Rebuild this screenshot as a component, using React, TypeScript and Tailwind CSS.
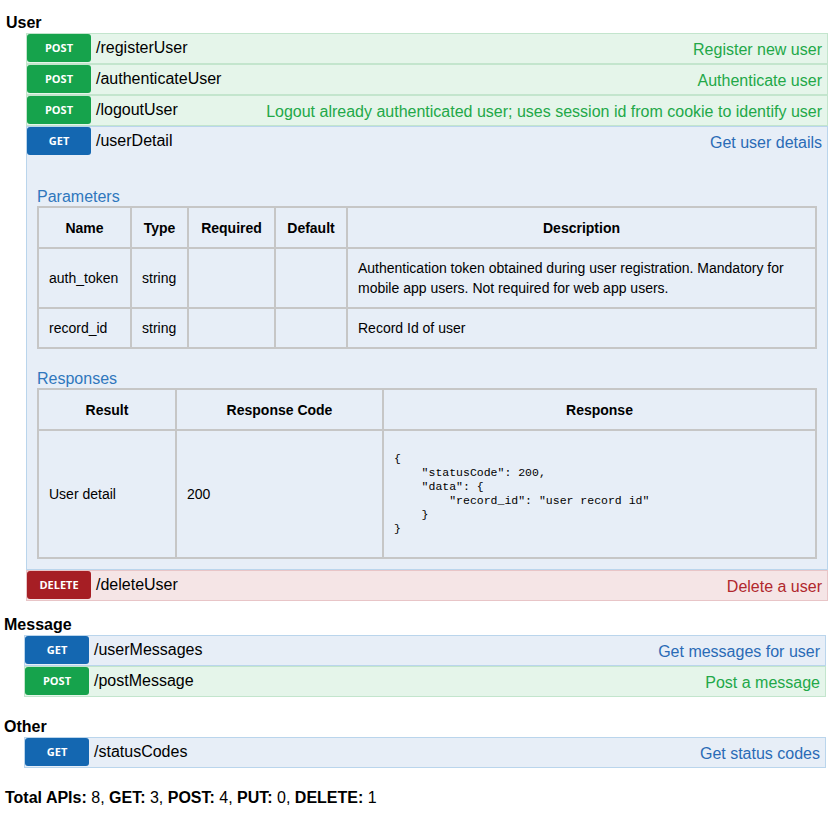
import React from "react";

type Method = "GET" | "POST" | "DELETE";

const tone: Record<Method, { row: string; badge: string; desc: string }> = {
  POST: { row: "bg-[#e5f5ea] border-[#c3e5cd]", badge: "bg-[#16a34c]", desc: "text-[#22a848]" },
  GET: { row: "bg-[#e7eef7] border-[#bad5ec]", badge: "bg-[#1467b1]", desc: "text-[#2a6bb6]" },
  DELETE: { row: "bg-[#f5e5e6] border-[#e8c5c7]", badge: "bg-[#a61e24]", desc: "text-[#b1282d]" },
};

function RowHead({ method, path, desc }: { method: Method; path: string; desc: string }) {
  const t = tone[method];
  return (
    <div className="flex h-[29px] items-start">
      <span
        className={`${t.badge} flex h-[28px] w-[64px] flex-none items-center justify-center rounded-[3px] font-['Open_Sans',sans-serif] text-[11px] font-bold text-white`}
      >
        {method}
      </span>
      <span className="ml-[5px] mt-[5px] text-base leading-[18px]">{path}</span>
      <span className={`ml-auto mr-[5px] mt-[7px] text-base leading-[18px] ${t.desc}`}>{desc}</span>
    </div>
  );
}

function Row(props: { method: Method; path: string; desc: string }) {
  return (
    <div className={`border ${tone[props.method].row}`}>
      <RowHead {...props} />
    </div>
  );
}

const th = "border border-[#c6c6c6] px-[10px] h-[41px] text-center font-bold";
const td = "border border-[#c6c6c6] px-[10px] align-middle";

function UserDetail() {
  return (
    <div className={`border ${tone.GET.row} pb-[10px]`}>
      <RowHead method="GET" path="/userDetail" desc="Get user details" />
      <div className="px-[10px] text-sm">
        <p className="mt-[32px] text-base leading-[18px] text-[#2f77bd]">Parameters</p>
        <table className="w-full border-separate border-spacing-0 border border-[#c6c6c6] leading-[20px]">
          <thead>
            <tr>
              <th className={`${th} w-[93px]`}>Name</th>
              <th className={`${th} w-[57px]`}>Type</th>
              <th className={`${th} w-[87px]`}>Required</th>
              <th className={`${th} w-[72px]`}>Default</th>
              <th className={th}>Description</th>
            </tr>
          </thead>
          <tbody>
            <tr className="h-[60px]">
              <td className={td}>auth_token</td>
              <td className={td}>string</td>
              <td className={td}></td>
              <td className={td}></td>
              <td className={td}>
                Authentication token obtained during user registration. Mandatory for mobile app users. Not required for web app users.
              </td>
            </tr>
            <tr className="h-[40px]">
              <td className={td}>record_id</td>
              <td className={td}>string</td>
              <td className={td}></td>
              <td className={td}></td>
              <td className={td}>Record Id of user</td>
            </tr>
          </tbody>
        </table>

        <p className="mt-[21px] text-base leading-[18px] text-[#2f77bd]">Responses</p>
        <table className="w-full border-separate border-spacing-0 border border-[#c6c6c6] leading-[20px]">
          <thead>
            <tr>
              <th className={`${th} w-[138px]`}>Result</th>
              <th className={`${th} w-[207px]`}>Response Code</th>
              <th className={th}>Response</th>
            </tr>
          </thead>
          <tbody>
            <tr className="h-[128px]">
              <td className={td}>User detail</td>
              <td className={td}>200</td>
              <td className={td}>
                <pre className="font-['Liberation_Mono','Courier_New',monospace] text-[11.5px] leading-[14px]">
{`{
    "statusCode": 200,
    "data": {
        "record_id": "user record id"
    }
}`}
                </pre>
              </td>
            </tr>
          </tbody>
        </table>
      </div>
    </div>
  );
}

export default function App() {
  return (
    <div className="min-h-screen bg-white pt-[14px] font-['Liberation_Sans',Arial,sans-serif] text-black">
      <section className="pl-[6px] pr-[9px]">
        <h2 className="mb-[1px] text-base font-bold leading-[18px]">User</h2>
        <div className="ml-[20px]">
          <Row method="POST" path="/registerUser" desc="Register new user" />
          <Row method="POST" path="/authenticateUser" desc="Authenticate user" />
          <Row method="POST" path="/logoutUser" desc="Logout already authenticated user; uses session id from cookie to identify user" />
          <UserDetail />
          <Row method="DELETE" path="/deleteUser" desc="Delete a user" />
        </div>
      </section>

      <section className="mt-[15px] pl-[4px] pr-[11px]">
        <h2 className="mb-[1px] text-base font-bold leading-[18px]">Message</h2>
        <div className="ml-[20px]">
          <Row method="GET" path="/userMessages" desc="Get messages for user" />
          <Row method="POST" path="/postMessage" desc="Post a message" />
        </div>
      </section>

      <section className="mt-[21px] pl-[4px] pr-[11px]">
        <h2 className="mb-[1px] text-base font-bold leading-[18px]">Other</h2>
        <div className="ml-[20px]">
          <Row method="GET" path="/statusCodes" desc="Get status codes" />
        </div>
      </section>

      <p className="mt-[21px] pl-[5px] text-base leading-[18px]">
        <b>Total APIs:</b> 8, <b>GET:</b> 3, <b>POST:</b> 4, <b>PUT:</b> 0, <b>DELETE:</b> 1
      </p>
    </div>
  );
}
